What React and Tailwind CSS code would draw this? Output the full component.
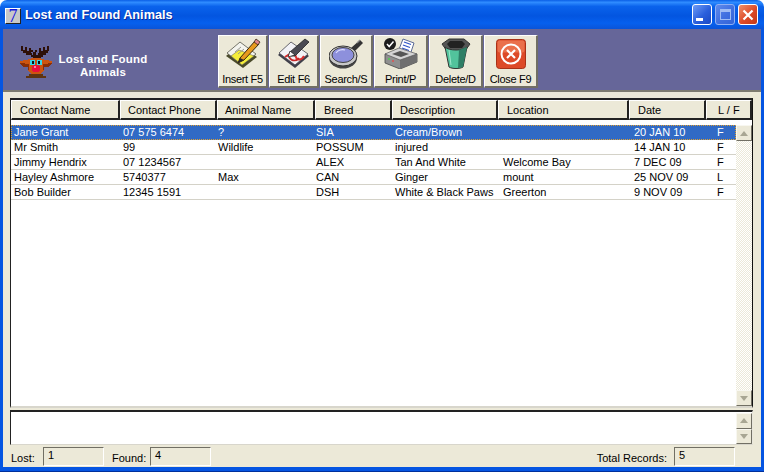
import React from "react";

const cols = ["w-[109px]", "w-[97px]", "w-[98px]", "w-[77px]", "w-[106px]", "w-[131px]", "w-[77px]", "w-[46px]"];
const headers = [
  ["Contact Name", "pl-[8px]"],
  ["Contact Phone", "pl-[7px]"],
  ["Animal Name", "pl-[7px]"],
  ["Breed", "pl-[8px]"],
  ["Description", "pl-[7px]"],
  ["Location", "pl-[8px]"],
  ["Date", "pl-[8px]"],
  ["L / F", "pl-[11px]"],
];
const rowCols = [
  "w-[109px] pl-[3px]",
  "w-[97px] pl-[3px]",
  "w-[98px] pl-[1px]",
  "w-[77px] pl-[1px]",
  "w-[106px] pl-[3px]",
  "w-[131px] pl-[5px]",
  "w-[77px] pl-[5px]",
  "w-[30px] pl-[11px]",
];
const rows = [
  ["Jane Grant", "07 575 6474", "?", "SIA", "Cream/Brown", "", "20 JAN 10", "F"],
  ["Mr Smith", "99", "Wildlife", "POSSUM", "injured", "", "14 JAN 10", "F"],
  ["Jimmy Hendrix", "07 1234567", "", "ALEX", "Tan And White", "Welcome Bay", "7 DEC 09", "F"],
  ["Hayley Ashmore", "5740377", "Max", "CAN", "Ginger", "mount", "25 NOV 09", "L"],
  ["Bob Builder", "12345 1591", "", "DSH", "White & Black Paws", "Greerton", "9 NOV 09", "F"],
];

function Deer() {
  return (
    <svg width="32" height="33" viewBox="0 0 32 33" shapeRendering="crispEdges">
      <path fill="#2e1008" d="M1 0h2v4h2V1h2v4h2V2h2v5h1v2h2V9h-1V6h-2V4h2v2h2V4h2v2h-1v3h2V7h1V2h2v3h2V1h2v3h2V0h2v5h-1v2h-2v2h-3v2h-2v1h-8v-1h-2V9H6V7H3V5H1z" />
      <path fill="#cc5510" d="M0 15h3v-1h5v-1h3v-1h10v1h3v1h5v1h3v3l-3 2h-3l-2 1v3l-2 3-2 1h-8l-2-1-2-3v-3l-2-1H3l-3-2z" />
      <path fill="#8a2f06" d="M0 17h3l3 1h3v6H8v-3H3zM32 17h-3l-3 1h-3v6h1v-3h5z" />
      <path fill="#5e3410" d="M9 28h14v2h3v2H6v-2h3z" />
      <rect x="10" y="14" width="5" height="5" fill="#35d7e8" />
      <rect x="17" y="14" width="5" height="5" fill="#35d7e8" />
      <rect x="12" y="15" width="2" height="3" fill="#111" />
      <rect x="18" y="15" width="2" height="3" fill="#111" />
      <path fill="#e8103a" d="M13 19h6v1h1v5h-1v1h-6v-1h-1v-5h1z" />
      <rect x="14" y="20" width="2" height="2" fill="#ff7f9f" />
    </svg>
  );
}

function InsertIcon() {
  return (
    <svg width="36" height="32" viewBox="0 0 36 32">
      <path d="M1 19 15 7l17 13-14 11z" fill="#4a4a2a" />
      <path d="M2 16 15 5l16 12-14 11z" fill="#f4f4ee" stroke="#55554a" strokeWidth=".8" />
      <path d="M6 19 14 13l15 6-12 9z" fill="#f5ee3a" stroke="#55554a" strokeWidth=".5" />
      <path d="M10 15l6-5M13 17l6-5" stroke="#9a9a90" strokeWidth="1" />
      <path d="M15 21 30 4l4 3-15 16-6 3z" fill="#e89a1e" stroke="#3a2a10" strokeWidth="1" />
      <path d="M29 5l2-3 4 3-2 3z" fill="#e0848c" stroke="#3a2a10" strokeWidth=".8" />
      <path d="M13 26l2-5 4 2z" fill="#2a2a2a" />
    </svg>
  );
}
function EditIcon() {
  return (
    <svg width="34" height="32" viewBox="0 0 34 32">
      <path d="M1 18 14 6l18 13-14 12z" fill="#3f3f4a" />
      <path d="M2 16 14 5l17 12-13 11z" fill="#f2f2f6" stroke="#44444c" strokeWidth=".8" />
      <path d="M8 20c5-4 10-4 11 0s6 3 8-1" fill="none" stroke="#d83030" strokeWidth="2" />
      <path d="M12 20c3 5 8 4 10 1" fill="none" stroke="#c82828" strokeWidth="1.6" />
      <path d="M13 15 28 2l4 3-14 14-4 0z" fill="#4a4a52" stroke="#222" strokeWidth=".8" />
      <path d="M11 20l2-6 5 4z" fill="#f8f8f8" stroke="#222" strokeWidth=".8" />
    </svg>
  );
}
function SearchIcon() {
  return (
    <svg width="34" height="31" viewBox="0 0 34 31">
      <path d="M22 10 31 2l3 3-9 9z" fill="#333" />
      <path d="M28 5l3-3" stroke="#888" strokeWidth="1.2" />
      <ellipse cx="14" cy="20" rx="14" ry="10.5" fill="#444" />
      <ellipse cx="14" cy="18" rx="14" ry="10" fill="#c8c8c8" stroke="#333" />
      <ellipse cx="14" cy="17" rx="11" ry="7.5" fill="#8d90dc" stroke="#444" />
      <path d="M7 15c2-3 6-4 9-3" stroke="#dfe0ff" strokeWidth="1.2" fill="none" />
    </svg>
  );
}
function PrintIcon() {
  return (
    <svg width="36" height="32" viewBox="0 0 36 32">
      <path d="M15 15 20 2l11 4-4 12z" fill="#fff" stroke="#4a5a8a" strokeWidth=".9" />
      <path d="M21 5l7 2.5M20 8l7 2.5M19 11l7 2.5" stroke="#2f55c8" strokeWidth="1.3" />
      <path d="M2 17v9l15 6 17-7v-8z" fill="#8f8f8f" stroke="#444" strokeWidth=".8" />
      <path d="M17 23v9l17-7v-8z" fill="#6f6f6f" />
      <path d="M2 17 16 11l18 6-17 6z" fill="#d4d4d4" stroke="#555" strokeWidth=".7" />
      <path d="M9 17l8-3 9 3-8 3z" fill="#555" />
      <circle cx="6" cy="22" r="1" fill="#4fd04f" />
      <circle cx="10" cy="24" r="1" fill="#e05050" />
      <circle cx="7" cy="7" r="6" fill="#1c1c1c" />
      <path d="M4 7l2.2 2.5L10.5 4.5" stroke="#fff" strokeWidth="1.5" fill="none" />
    </svg>
  );
}
function DeleteIcon() {
  return (
    <svg width="30" height="31" viewBox="0 0 30 31">
      <path d="M1 6 8 1h15l6 5-5 7H6z" fill="#555" stroke="#333" />
      <path d="M6 6 9 3h12l3 3-3 4H9z" fill="#222" />
      <path d="M4 9l4 20c3 2 11 2 14 0l4-20c-4 4-18 4-22 0z" fill="#52c39c" stroke="#333" />
      <path d="M18 12l-1 18 5-1 4-20z" fill="#2e7f66" />
      <path d="M8 12l2 15" stroke="#9de8cc" strokeWidth="1" />
    </svg>
  );
}
function CloseIcon() {
  return (
    <svg width="30" height="30" viewBox="0 0 30 30">
      <rect x="0.5" y="0.5" width="29" height="29" rx="3" fill="#dd4a28" stroke="#a83218" />
      <rect x="1.5" y="1.5" width="27" height="12" rx="2" fill="#f0805a" opacity=".7" />
      <circle cx="15" cy="15" r="9.5" fill="none" stroke="#fff" strokeWidth="2" />
      <path d="M11 11l8 8M19 11l-8 8" stroke="#fff" strokeWidth="2.2" />
    </svg>
  );
}

function ToolButton({ width, label, children }) {
  return (
    <div className={`${width} h-[53px] flex flex-col items-center bg-[#ece9d8] border-t border-l border-t-white border-l-white border-r-2 border-b-2 border-r-[#716f64] border-b-[#716f64]`}>
      <div className="h-[33px] flex items-end justify-center">{children}</div>
      <div className="text-[11px] leading-[14px] tracking-[-0.3px] text-black mt-[3px] whitespace-nowrap">{label}</div>
    </div>
  );
}

function ScrollBtn({ up }) {
  return (
    <div className="w-[16px] h-[16px] flex items-center justify-center bg-[#ece9d8] border-t border-l border-t-[#f8f7f0] border-l-[#f8f7f0] border-r border-b border-r-[#716f64] border-b-[#716f64]">
      <svg width="8" height="5" viewBox="0 0 8 5">
        <path d={up ? "M4 0 8 5H0z" : "M0 0h8L4 5z"} fill="#a8a693" />
      </svg>
    </div>
  );
}

function StatBox({ value }) {
  return (
    <div className="w-[61px] h-[19px] bg-[#ece9d8] border-t border-l border-t-[#716f64] border-l-[#716f64] border-b border-r border-b-white border-r-white pl-[4px] text-[11px] leading-[14px] text-black">
      {value}
    </div>
  );
}

function WinButton({ children, bg, border = "border-white" }) {
  return (
    <div className={`w-[20px] h-[21px] rounded-[3px] border ${border} flex items-center justify-center ${bg}`}>
      {children}
    </div>
  );
}

export default function App() {
  return (
    <div className="w-[764px] h-[472px] flex flex-col overflow-hidden bg-white font-['Liberation_Sans',sans-serif]">
      <div className="h-[29px] shrink-0 flex items-center pl-[5px] pr-[6px] rounded-t-[7px] bg-[linear-gradient(180deg,#0a5fe6_0%,#2f8cff_8%,#0a63ec_22%,#0355e0_55%,#0660ee_80%,#0a54d8_100%)]">
        <div className="w-[16px] h-[16px] mt-[2px] bg-[#c8c8c8] border-t border-l border-white border-r border-b border-r-[#222] border-b-[#222] flex items-center justify-center text-[18px] leading-none text-[#1010e0] font-['Liberation_Serif',serif]">7</div>
        <div className="ml-[4px] mt-[3px] text-white font-bold text-[12.7px] [text-shadow:1px_1px_#0a2a9a]">Lost and Found Animals</div>
        <div className="ml-auto flex gap-[3px]">
          <WinButton bg="bg-[linear-gradient(135deg,#6f9cf5,#2a5fdc_55%,#1a48c4)]">
            <div className="w-[7px] h-[3px] bg-white mt-[9px] mr-[5px]" />
          </WinButton>
          <WinButton bg="bg-[linear-gradient(135deg,#5f8aec,#3f6fe0_55%,#3464d8)]" border="border-[#8fb0f4]">
            <div className="w-[11px] h-[11px] border border-t-[3px] border-[#9fbcf4]" />
          </WinButton>
          <WinButton bg="bg-[linear-gradient(135deg,#f0906a,#dd4a28_55%,#c23818)]">
            <svg width="12" height="12" viewBox="0 0 12 12"><path d="M1.5 1.5l9 9M10.5 1.5l-9 9" stroke="#fff" strokeWidth="2.2" /></svg>
          </WinButton>
        </div>
      </div>

      <div className="flex-1 min-h-0 flex flex-col px-[3px] pb-[4px] bg-[#0555e2] border-b border-b-[#00309c]">
        <div className="h-[63px] shrink-0 flex bg-[#666699] border-b-2 border-b-[#7d7b70]">
          <div className="w-[215px] shrink-0 flex items-center pl-[17px] pt-[6px]">
            <Deer />
            <div className="w-[100px] ml-[1px] mt-[6px] text-center text-white font-bold text-[11.5px] leading-[13px] tracking-[0.2px]">
              Lost and Found<br />Animals
            </div>
          </div>
          <div className="flex gap-[1px] pt-[6px]">
            <ToolButton width="w-[50px]" label="Insert F5"><InsertIcon /></ToolButton>
            <ToolButton width="w-[50px]" label="Edit F6"><EditIcon /></ToolButton>
            <ToolButton width="w-[53px]" label="Search/S"><SearchIcon /></ToolButton>
            <ToolButton width="w-[54px]" label="Print/P"><PrintIcon /></ToolButton>
            <ToolButton width="w-[54px]" label="Delete/D"><DeleteIcon /></ToolButton>
            <ToolButton width="w-[54px]" label="Close F9"><CloseIcon /></ToolButton>
          </div>
        </div>

        <div className="flex-1 min-h-0 flex flex-col bg-[#ece9d8] pt-[6px] pl-[7px] pr-[8px]">
          <div className="h-[310px] shrink-0 flex flex-col bg-white border-t-2 border-l border-t-[#222] border-l-[#222] border-r border-r-[#111] border-b-2 border-b-[#d8d6cc] text-[11px] text-black">
            <div className="h-[20px] shrink-0 flex">
              {headers.map(([h, p], i) => (
                <div key={h} className={`${cols[i]} ${p} shrink-0 bg-[#ece9d8] border-t border-l border-t-white border-l-white border-r-2 border-b-2 border-r-[#222] border-b-[#222] leading-[19px] whitespace-nowrap`}>
                  {h}
                </div>
              ))}
            </div>
            <div className="flex-1 min-h-0 flex pt-[5px]">
              <div className="w-[725px] shrink-0 flex flex-col">
                {rows.map((r, ri) => (
                  <div key={ri} className={`h-[15px] shrink-0 flex leading-[14px] ${ri === 0 ? "bg-[#316ac5] text-white outline-1 outline-dotted -outline-offset-1 outline-[#e0a030]" : "border-b border-b-[#d4d2c8]"}`}>
                    {r.map((c, i) => (
                      <div key={i} className={`${rowCols[i]} shrink-0 whitespace-nowrap`}>{c}</div>
                    ))}
                  </div>
                ))}
              </div>
              <div className="w-[16px] shrink-0 flex flex-col">
                <ScrollBtn up />
                <div className="flex-1 bg-[repeating-conic-gradient(#ffffff_0_25%,#ece9d8_0_50%)] bg-[length:2px_2px]" />
                <ScrollBtn />
              </div>
            </div>
          </div>

          <div className="h-[35px] mt-[2px] shrink-0 flex justify-end bg-white border-t-2 border-l border-t-[#222] border-l-[#222] border-b border-b-[#d8d6cc] border-r border-r-[#e8e6dc]">
            <div className="w-[16px] flex flex-col pt-[1px]">
              <ScrollBtn up />
              <ScrollBtn />
            </div>
          </div>

          <div className="flex-1 min-h-0 flex items-start pt-[2px] text-[11px] text-black">
            <div className="w-[33px] pl-[1px] mt-[4px] leading-[14px]">Lost:</div>
            <StatBox value="1" />
            <div className="w-[46px] pl-[8px] mt-[4px] leading-[14px]">Found:</div>
            <StatBox value="4" />
            <div className="ml-auto mr-[7px] mt-[4px] leading-[14px]">Total Records:</div>
            <div className="mr-[18px]"><StatBox value="5" /></div>
          </div>
        </div>
      </div>
    </div>
  );
}
